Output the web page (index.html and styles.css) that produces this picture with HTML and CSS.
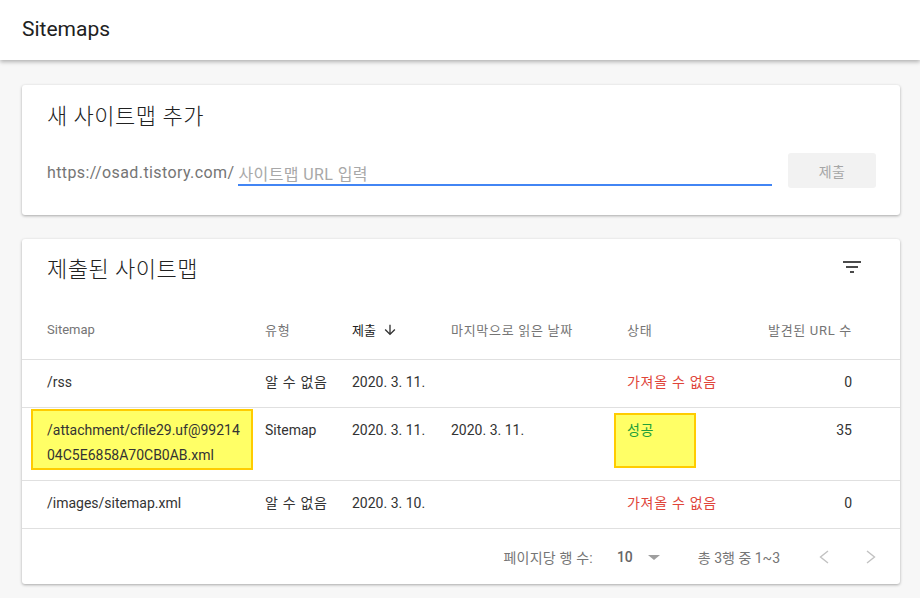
FILE: index.html
```html
<!DOCTYPE html>
<html lang="ko">
<head>
<meta charset="utf-8">
<title>Sitemaps</title>
<link rel="stylesheet" href="styles.css">
</head>
<body>
<header class="topbar">
  <h1 class="page-title">Sitemaps</h1>
</header>
<main class="content">
  <section class="card add-card">
    <h2 class="card-title">새 사이트맵 추가</h2>
    <div class="add-row">
      <span class="prefix">https://osad.tistory.com/</span>
      <input class="url-input" type="text" placeholder="사이트맵 URL 입력">
      <button class="submit-btn" type="button">제출</button>
    </div>
  </section>

  <section class="card list-card">
    <div class="list-head">
      <h2 class="card-title">제출된 사이트맵</h2>
      <svg class="filter-icon" viewBox="0 0 24 24" width="24" height="24"><path d="M10 18h4v-2h-4v2zM3 6v2h18V6H3zm3 7h12v-2H6v2z"/></svg>
    </div>
    <div class="table">
      <div class="tr th">
        <div>Sitemap</div>
        <div class="ko">유형</div>
        <div class="sorted">제출<svg class="sort-icon" viewBox="0 0 24 24" width="16" height="16"><path d="M20 12l-1.41-1.41L13 16.17V4h-2v12.17l-5.58-5.59L4 12l8 8 8-8z"/></svg></div>
        <div class="ko">마지막으로 읽은 날짜</div>
        <div class="ko">상태</div>
        <div class="num ko">발견된 URL 수</div>
      </div>
      <div class="tr">
        <div class="cell">/rss</div>
        <div class="cell ko">알 수 없음</div>
        <div class="cell">2020. 3. 11.</div>
        <div class="cell"></div>
        <div class="cell ko status-err">가져올 수 없음</div>
        <div class="cell num">0</div>
      </div>
      <div class="tr marked">
        <span class="mark mark-path"></span>
        <span class="mark mark-status"></span>
        <div class="cell">/attachment/cfile29.uf@99214<br>04C5E6858A70CB0AB.xml</div>
        <div class="cell">Sitemap</div>
        <div class="cell">2020. 3. 11.</div>
        <div class="cell">2020. 3. 11.</div>
        <div class="cell ko status-ok">성공</div>
        <div class="cell num">35</div>
      </div>
      <div class="tr">
        <div class="cell">/images/sitemap.xml</div>
        <div class="cell ko">알 수 없음</div>
        <div class="cell">2020. 3. 10.</div>
        <div class="cell"></div>
        <div class="cell ko status-err">가져올 수 없음</div>
        <div class="cell num">0</div>
      </div>
    </div>
    <div class="pager">
      <span class="pager-label">페이지당 행 수:</span>
      <span class="pager-size">10</span>
      <span class="pager-caret"></span>
      <span class="pager-range">총 3행 중 1~3</span>
      <svg class="chev" viewBox="0 0 24 24" width="24" height="24"><polyline points="16,6 8.5,12 16,18"/></svg>
      <svg class="chev" viewBox="0 0 24 24" width="24" height="24"><polyline points="8,6 15.5,12 8,18"/></svg>
    </div>
  </section>
</main>
</body>
</html>
```

FILE: styles.css
```css
* { box-sizing: border-box; }

html, body {
  margin: 0;
  padding: 0;
}

body {
  width: 920px;
  height: 598px;
  overflow: hidden;
  background: #f7f7f7;
  font-family: Roboto, "Noto Sans CJK KR", sans-serif;
  color: #333333;
}

.topbar {
  height: 60px;
  background: #ffffff;
  box-shadow: 0 2px 4px rgba(0, 0, 0, 0.28);
  position: relative;
  z-index: 2;
}

.page-title {
  margin: 0;
  padding-left: 22px;
  font-size: 21px;
  font-weight: 400;
  line-height: 58px;
  color: #212121;
}

.content {
  padding: 25px 20px 0 22px;
  display: flex;
  flex-direction: column;
  gap: 24px;
}

.card {
  background: #ffffff;
  border-radius: 3px;
  box-shadow: 0 1px 3px rgba(0, 0, 0, 0.32);
}

.card-title {
  margin: 0;
  font-size: 22px;
  font-weight: 300;
  letter-spacing: 0.5px;
  line-height: 28px;
  color: #212121;
}

.ko {
  letter-spacing: 0.7px;
}

/* add card */
.add-card {
  height: 130px;
  padding: 18px 24px 0 25px;
}

.add-row {
  margin-top: 22px;
  display: flex;
  align-items: flex-start;
}

.prefix {
  padding-top: 10px;
  font-size: 16px;
  line-height: 20px;
  letter-spacing: 0.4px;
  color: #757575;
  white-space: nowrap;
}

.url-input {
  margin-left: 4px;
  width: 534px;
  height: 33px;
  padding: 12px 0 0 0;
  border: none;
  border-bottom: 2px solid #4285f4;
  outline: none;
  background: transparent;
  font-family: Roboto, "Noto Sans CJK KR", sans-serif;
  font-size: 16px;
  line-height: 19px;
  letter-spacing: 0.4px;
  color: #212121;
}

.url-input::placeholder {
  color: #a8a8a8;
}

.submit-btn {
  margin-left: 16px;
  width: 88px;
  height: 35px;
  border: none;
  border-radius: 3px;
  background: #f2f2f2;
  font-family: Roboto, "Noto Sans CJK KR", sans-serif;
  font-size: 14px;
  letter-spacing: 0.5px;
  color: #a6a6a6;
  padding: 0;
}

/* list card */
.list-head {
  height: 61px;
  padding: 0 36px 0 25px;
  display: flex;
  align-items: center;
  justify-content: space-between;
}

.filter-icon {
  align-self: flex-start;
  margin-top: 16px;
  fill: #4a4a4a;
}

.tr {
  display: grid;
  grid-template-columns: 218px 87px 99px 176px 125px 100px;
  padding: 0 48px 0 25px;
  border-bottom: 1px solid #e0e0e0;
  position: relative;
}

.th {
  height: 60px;
  align-items: center;
  font-size: 13px;
  color: #757575;
}

.th .sorted {
  color: #212121;
  display: flex;
  align-items: center;
}

.sort-icon {
  margin-left: 6px;
  fill: #333333;
}

.num {
  text-align: right;
}

.cell {
  position: relative;
  z-index: 1;
  padding: 10px 0 12px;
  font-size: 14px;
  line-height: 25px;
  color: #333333;
}

.status-err { color: #e0453a; }
.status-ok { color: #22a03a; }

.mark {
  position: absolute;
  z-index: 0;
  background: #ffff66;
  border: 2px solid #ffcc00;
}

.mark-path {
  left: 9px;
  top: 1px;
  width: 222px;
  height: 61px;
}

.mark-status {
  left: 592px;
  top: 5px;
  width: 82px;
  height: 55px;
}

/* pager */
.pager {
  height: 55px;
  padding-right: 17px;
  display: flex;
  align-items: center;
  justify-content: flex-end;
  font-size: 14px;
  color: #757575;
}

.pager-label {
  letter-spacing: 0.2px;
}

.pager-size {
  margin-left: 24px;
  font-size: 14px;
  font-weight: 500;
  color: #666666;
}

.pager-caret {
  margin-left: 15px;
  width: 0;
  height: 0;
  border-left: 6px solid transparent;
  border-right: 6px solid transparent;
  border-top: 5px solid #9e9e9e;
  margin-top: 2px;
}

.pager-range {
  margin-left: 38px;
  margin-right: 32px;
}

.chev {
  fill: none;
  stroke: #c2c2c2;
  stroke-width: 1.4;
}

.chev + .chev {
  margin-left: 23px;
}
```
